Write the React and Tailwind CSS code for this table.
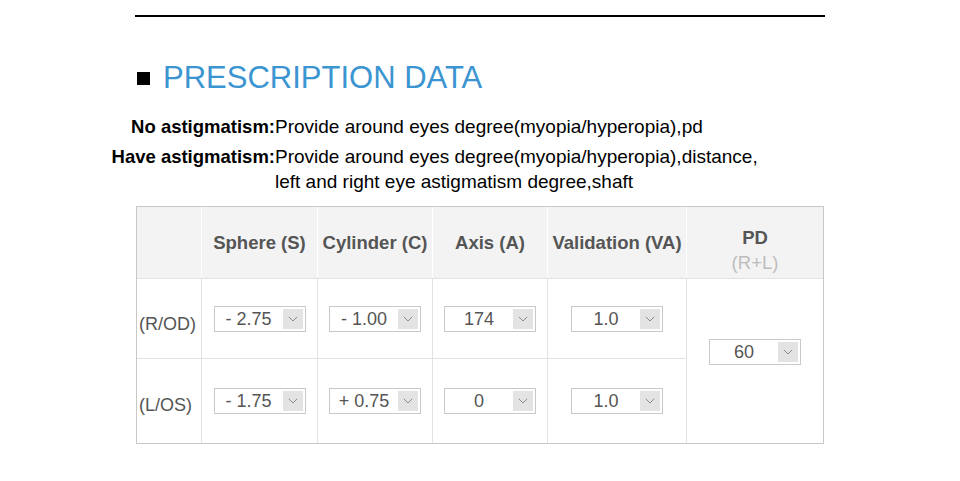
import React from "react";

function Chevron() {
  return (
    <svg width="10" height="6" viewBox="0 0 10 6" fill="none">
      <path d="M0.8 0.8 L5 5 L9.2 0.8" stroke="#8a8a8a" strokeWidth="1" />
    </svg>
  );
}

function Sel({ value }) {
  return (
    <div className="flex h-[26px] w-[92px] items-center border border-[#c9c9c9] bg-white pr-[2px]">
      <div className="flex-1 whitespace-pre text-center text-[18px] leading-none text-[#555]">{value}</div>
      <div className="flex h-[20px] w-[20px] items-center justify-center bg-[#e3e3e3]">
        <Chevron />
      </div>
    </div>
  );
}

const head = "flex items-center justify-center bg-[#f3f3f3] text-[18.5px] font-bold text-[#555]";
const cell = "flex items-center justify-center border-l border-t border-[#e2e2e2]";

export default function App() {
  return (
    <div
      className="min-h-[481px] bg-white"
      style={{ fontFamily: '"Liberation Sans", Arial, sans-serif' }}
    >
      <div className="mx-auto w-[690px] pt-[15px]">
        <div className="h-[2px] bg-black" />
        <div className="mt-[43px] flex items-center">
          <div className="ml-[2px] h-[13px] w-[13px] bg-black" />
          <div className="ml-[13px] text-[31px] leading-[36px] text-[#3b95d1]">
            PRESCRIPTION DATA
          </div>
        </div>
        <div className="mt-[18px] ml-[-35px] grid grid-cols-[175px_auto] text-[19px] leading-[25px] text-black">
          <div className="text-right text-[18.5px] font-bold">No astigmatism:</div>
          <div>Provide around eyes degree(myopia/hyperopia),pd</div>
          <div className="mt-[5px] text-right text-[18.5px] font-bold">Have astigmatism:</div>
          <div className="mt-[5px]">
            Provide around eyes degree(myopia/hyperopia),distance,
            <br />
            left and right eye astigmatism degree,shaft
          </div>
        </div>
        <div className="mt-[12px] ml-px grid w-[688px] grid-cols-[64px_116px_115px_115px_139px_137px] grid-rows-[71px_80px_85px] border border-[#c8c8c8]">
          <div className={head} />
          <div className={head + " border-l border-white"}>Sphere (S)</div>
          <div className={head + " border-l border-white"}>Cylinder (C)</div>
          <div className={head + " border-l border-white"}>Axis (A)</div>
          <div className={head + " border-l border-white"}>Validation (VA)</div>
          <div className="flex flex-col items-center border-l border-white bg-[#f3f3f3] pt-[18px] text-[18.5px] leading-[25px]">
            <div className="font-bold text-[#555]">PD</div>
            <div className="text-[#bdbdbd]">(R+L)</div>
          </div>

          <div className="flex items-center border-t border-[#e2e2e2] pt-[12px] pl-[2px] text-[18px] text-[#555]">
            (R/OD)
          </div>
          <div className={cell}><Sel value="- 2.75" /></div>
          <div className={cell}><Sel value="- 1.00" /></div>
          <div className={cell}><Sel value="174" /></div>
          <div className={cell}><Sel value="1.0" /></div>
          <div className="row-span-2 flex justify-center border-l border-t border-[#e2e2e2] pt-[60px]">
            <Sel value="60" />
          </div>

          <div className="flex items-center border-t border-[#e2e2e2] pt-[8px] pl-[2px] text-[18px] text-[#555]">
            (L/OS)
          </div>
          <div className={cell}><Sel value="- 1.75" /></div>
          <div className={cell}><Sel value="+ 0.75" /></div>
          <div className={cell}><Sel value="0" /></div>
          <div className={cell}><Sel value="1.0" /></div>
        </div>
      </div>
    </div>
  );
}
